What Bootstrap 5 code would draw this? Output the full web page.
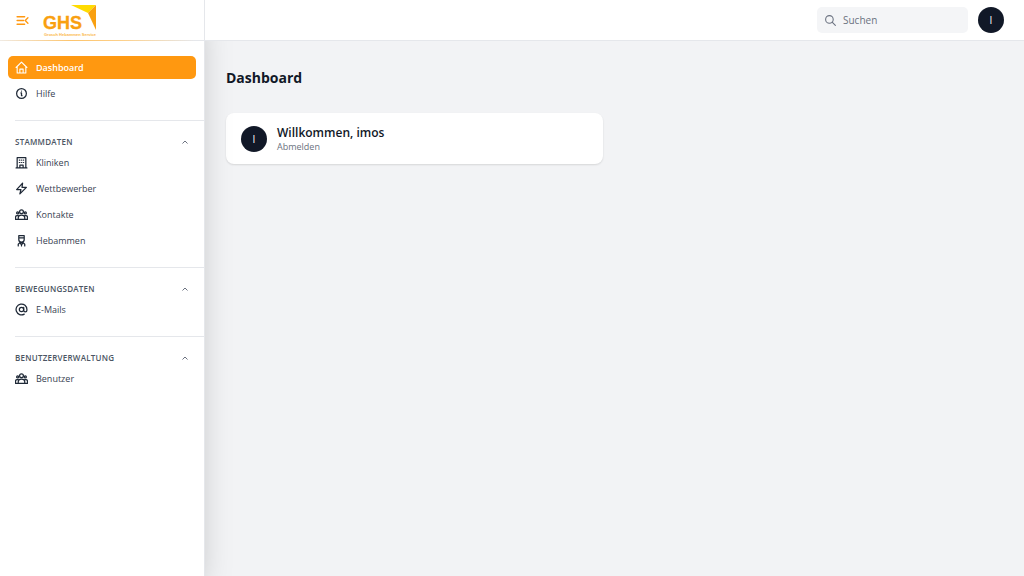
<!DOCTYPE html>
<html lang="de">
<head>
<meta charset="utf-8">
<meta name="viewport" content="width=device-width, initial-scale=1">
<title>Dashboard</title>
<link href="https://cdn.jsdelivr.net/npm/bootstrap@5.3.0/dist/css/bootstrap.min.css" rel="stylesheet">
<style>
  body { font-family: "Open Sans", "Noto Sans", sans-serif; font-size: 9px; line-height: 13px; background: #f2f3f5; color: #111827; }
  svg { display: block; flex: none; }
  .ico { width: 13px; height: 13px; fill: none; stroke: currentColor; stroke-width: 2; stroke-linecap: round; stroke-linejoin: round; }
  .side { width: 205px; background: #fff; border-right: 1px solid #e5e7eb; box-shadow: 0 16px 32px -8px rgba(0,0,0,.25); z-index: 2; }
  .brand { height: 41px; padding-left: 16px; gap: 14px; border-bottom: 1px solid; border-image: linear-gradient(90deg, #f0ebe5, #fdc46c 35%, #fdd08a 60%, #e5e7eb 95%) 1; }
  .toggle { color: #ff9810; }
  .first { padding: 15px 8px; }
  .menu { gap: 3px; }
  .menu .nav-link { height: 23px; padding: 0 7px; gap: 8px; border-radius: 5px; color: #374151; font-weight: 500; }
  .menu .nav-link .ico { color: #1f2937; stroke-width: 2.3; }
  .menu .nav-link.active { background: #ff9810; color: #fff; font-weight: 600; }
  .menu .nav-link.active .ico { color: #fff; stroke-width: 2; }
  .group-box { margin-left: 15px; border-top: 1px solid #e5e7eb; padding: 15px 8px 15px 0; }
  .group-box .menu { margin: 4px 0 0 -7px; }
  .group-title { height: 11px; padding: 0 8px 0 0; font-size: 8px; line-height: 11px; font-weight: 600; color: #4b5563; letter-spacing: .03em; }
  .chev { width: 6px; height: 6px; stroke-width: 4; color: #6b7280; }
  .topbar { height: 41px; background: #fff; border-bottom: 1px solid #e5e7eb; padding-right: 20px; gap: 10px; z-index: 3; }
  .search { width: 151px; height: 26px; border-radius: 5px; background: #f4f5f7; padding: 0 7px; gap: 6px; color: #6b7280; }
  .search input { font-size: 10px; line-height: 16px; color: #6b7280; outline: 0; }
  .search input::placeholder { color: #6b7280; opacity: 1; }
  .avatar, .avatar:hover { width: 26px; height: 26px; background: #111827; color: #fff; font-size: 10px; line-height: 26px; }
  .content { padding: 27px 20px 27px 21px; }
  .page-title { font-size: 14px; line-height: 20px; font-weight: 700; margin-bottom: 25px; }
  .welcome { border-radius: 8px; padding: 11px 15px; gap: 10px; box-shadow: 0 1px 2px rgba(0,0,0,.12); }
  .welcome h2 { font-size: 12px; line-height: 17px; font-weight: 600; }
  .logout { color: #6b7280; line-height: 12px; }
</style>
</head>
<body>
<svg class="d-none" aria-hidden="true">
  <symbol id="people" viewBox="0 0 24 24"><circle cx="12" cy="7" r="3.500"/><circle cx="5" cy="9" r="2"/><circle cx="19" cy="9" r="2"/><path d="M6 21v-3a6 5 0 0 1 12 0v3zM6 14H4a3 3 0 0 0-3 3v4h5M18 14h2a3 3 0 0 1 3 3v4h-5"/></symbol>
  <symbol id="up" viewBox="0 0 24 24"><path d="M3 17l9-9 9 9"/></symbol>
</svg>
<div class="d-flex min-vh-100">
  <aside class="side position-relative flex-shrink-0">
    <div class="brand d-flex align-items-center">
      <button type="button" class="toggle btn p-0 border-0" aria-label="Menü einklappen">
        <svg class="ico" viewBox="0 0 24 24"><path stroke-width="2.500" d="M2 5h14M2 12h12M2 19h14M22 7l-5 5 5 5"/></svg>
      </button>
      <a href="#" aria-label="GHS Grosch Hebammen Service">
        <svg width="56" height="40" viewBox="0 0 56 40">
          <path d="M28 5h25l-8 8z" fill="#ffdb00"/><path d="M53 5v25l-8-17z" fill="#f9a010"/>
          <text x="0" y="29" font-family="Liberation Sans" font-size="18" font-weight="700" fill="#f9a010" stroke="#f9a010" stroke-width=".3">GHS</text>
          <text x="1" y="36" font-family="Liberation Sans" font-size="4" font-weight="700" fill="#fbb84a">Grosch Hebammen Service</text>
        </svg>
      </a>
    </div>
    <nav>
      <ul class="menu nav flex-column first">
        <li><a class="nav-link active d-flex align-items-center" href="#"><svg class="ico" viewBox="0 0 24 24"><path d="M2 12L12 2l10 10M4 10v12h16V10M9 22v-7h6v7"/></svg>Dashboard</a></li>
        <li><a class="nav-link d-flex align-items-center" href="#"><svg class="ico" viewBox="0 0 24 24"><circle cx="12" cy="12" r="9"/><path d="M11 11h1v5h1M12 7.500v.1"/></svg>Hilfe</a></li>
      </ul>
      <section class="group-box">
        <button type="button" class="group-title btn border-0 w-100 d-flex align-items-center justify-content-between">STAMMDATEN<svg class="ico chev"><use href="#up"/></svg></button>
        <ul class="menu nav flex-column">
          <li><a class="nav-link d-flex align-items-center" href="#"><svg class="ico" viewBox="0 0 24 24"><path d="M2 22h20M4 22V3h16v19M8 7.500h1M12 7.500h.5M15.500 7.500h.5M8 12h1M12 12h.5M15.500 12h.5M9 22v-5h6v5"/></svg>Kliniken</a></li>
          <li><a class="nav-link d-flex align-items-center" href="#"><svg class="ico" viewBox="0 0 24 24"><path d="M14 2L3 14h8l-2 8 12-12h-8z"/></svg>Wettbewerber</a></li>
          <li><a class="nav-link d-flex align-items-center" href="#"><svg class="ico"><use href="#people"/></svg>Kontakte</a></li>
          <li><a class="nav-link d-flex align-items-center" href="#"><svg class="ico" viewBox="0 0 24 24"><path d="M7 3h10v7a5 5 0 0 1-10 0zM7 7h10M6 22v-3l3-3h6l3 3v3M9 16l3 4 3-4M12 20v2"/></svg>Hebammen</a></li>
        </ul>
      </section>
      <section class="group-box">
        <button type="button" class="group-title btn border-0 w-100 d-flex align-items-center justify-content-between">BEWEGUNGSDATEN<svg class="ico chev"><use href="#up"/></svg></button>
        <ul class="menu nav flex-column">
          <li><a class="nav-link d-flex align-items-center" href="#"><svg class="ico" viewBox="0 0 24 24"><circle cx="12" cy="12" r="4"/><path d="M16 8v5.500a3 3 0 0 0 6 0V12a10 10 0 1 0-5 8.600"/></svg>E-Mails</a></li>
        </ul>
      </section>
      <section class="group-box">
        <button type="button" class="group-title btn border-0 w-100 d-flex align-items-center justify-content-between">BENUTZERVERWALTUNG<svg class="ico chev"><use href="#up"/></svg></button>
        <ul class="menu nav flex-column">
          <li><a class="nav-link d-flex align-items-center" href="#"><svg class="ico"><use href="#people"/></svg>Benutzer</a></li>
        </ul>
      </section>
    </nav>
  </aside>
  <div class="flex-grow-1">
    <header class="topbar position-relative d-flex align-items-center justify-content-end">
      <label class="search d-flex align-items-center"><svg class="ico" viewBox="0 0 24 24"><circle cx="10" cy="10" r="7"/><path d="M15 15l6 6"/></svg><input class="border-0 bg-transparent p-0 w-100" type="search" placeholder="Suchen" aria-label="Suchen"></label>
      <button type="button" class="avatar btn p-0 border-0 rounded-circle">I</button>
    </header>
    <main class="content">
      <h1 class="page-title">Dashboard</h1>
      <div class="row"><div class="col-6"><section class="welcome bg-white d-flex align-items-center">
        <span class="avatar rounded-circle text-center">I</span>
        <div><h2 class="m-0">Willkommen, imos</h2><a href="#" class="logout text-decoration-none d-block">Abmelden</a></div>
      </section></div></div>
    </main>
  </div>
</div>
<script src="https://cdn.jsdelivr.net/npm/bootstrap@5.3.0/dist/js/bootstrap.bundle.min.js"></script>
</body>
</html>
